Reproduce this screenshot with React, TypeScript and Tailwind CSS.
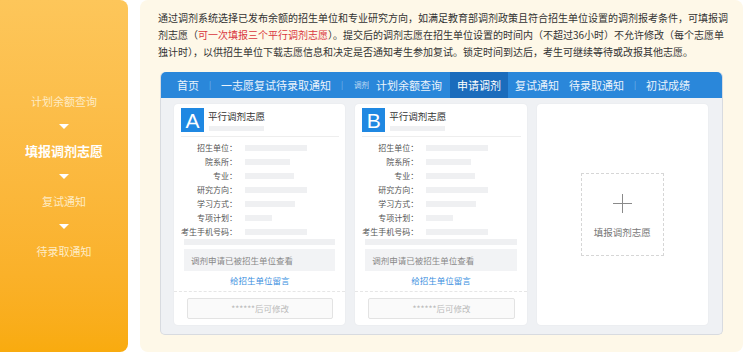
import React from "react";

const FONT = { fontFamily: '"Noto Sans CJK SC", "Noto Sans", sans-serif' };

const steps = [
  { label: "计划余额查询", active: false },
  { label: "填报调剂志愿", active: true },
  { label: "复试通知", active: false },
  { label: "待录取通知", active: false },
];

const fields = [
  { label: "招生单位：", w: 62 },
  { label: "院系所：", w: 45 },
  { label: "专业：", w: 49 },
  { label: "研究方向：", w: 62 },
  { label: "学习方式：", w: 50 },
  { label: "专项计划：", w: 27 },
  { label: "考生手机号码：", w: 62 },
];

const Arrow = () => (
  <div className="h-[25px] flex items-center justify-center">
    <div className="w-0 h-0 border-l-[5px] border-r-[5px] border-t-[5px] border-l-transparent border-r-transparent border-t-white" />
  </div>
);

const Sidebar: React.FC = () => (
  <div className="w-[128px] h-[352px] shrink-0 rounded-r-[8px] bg-linear-to-b from-[#fdc65a] to-[#f9ab0e] flex flex-col justify-center">
    {steps.map((s, i) => (
      <React.Fragment key={s.label}>
        {i > 0 && <Arrow />}
        <div
          className={
            "h-[25px] flex items-center justify-center " +
            (s.active
              ? "text-white text-[13px] font-bold"
              : "text-[#feebc4] text-[11px]")
          }
        >
          {s.label}
        </div>
      </React.Fragment>
    ))}
  </div>
);

const NavBar: React.FC = () => (
  <div className="h-[26px] bg-[#2a87da] flex items-center pl-[11px] text-[11px] text-[#eaf3fc] rounded-t-[5px]">
    <span className="px-[5px]">首页</span>
    <span className="w-[12px] text-center text-[8px] text-white/40">|</span>
    <span className="px-[5px]">一志愿复试待录取通知</span>
    <span className="w-[12px] text-center text-[8px] text-white/40">|</span>
    <span className="ml-[6px] mr-[2px] text-[7.5px] text-white/70">调剂</span>
    <span className="px-[5px]">计划余额查询</span>
    <span className="ml-[3px] px-[7px] h-full flex items-center bg-[#1b6cbc] text-white">
      申请调剂
    </span>
    <span className="ml-[2px] px-[5px]">复试通知</span>
    <span className="px-[5px]">待录取通知</span>
    <span className="w-[12px] text-center text-[8px] text-white/40">|</span>
    <span className="px-[5px]">初试成绩</span>
  </div>
);

const WishCard: React.FC<{ letter: string }> = ({ letter }) => (
  <div className="bg-white rounded-[4px] h-[221px] shadow-[0_0_2px_rgba(0,0,0,0.06)] flex flex-col">
    <div className="h-[32px] flex pt-[4px] pl-[7px]">
      <div
        className="w-[23px] h-[24px] bg-[#1f88e2] text-white flex items-center justify-center text-[21px] leading-none"
        style={{ fontFamily: '"Liberation Sans", Arial, sans-serif' }}
      >
        {letter}
      </div>
      <div className="ml-[4px] flex flex-col">
        <div className="text-[9.5px] leading-[12px] mt-[2px] text-[#333]">平行调剂志愿</div>
        <div className="w-[55px] h-[5px] bg-[#eff0f2] mt-[4px] ml-[1px]" />
      </div>
    </div>
    <div className="h-px bg-[#eeeeee] ml-[7px] mr-[6px]" />
    <div className="pt-[4px]">
      {fields.map((f) => (
        <div key={f.label} className="h-[14px] flex items-center">
          <div className="w-[63px] text-right text-[8px] text-[#555] whitespace-nowrap">
            {f.label}
          </div>
          <div className="ml-[8px] h-[6px] bg-[#eff0f2]" style={{ width: f.w }} />
        </div>
      ))}
    </div>
    <div className="mx-[10px] h-[6px] bg-[#eff0f2]" />
    <div className="mx-[10px] mt-[4px] h-[22px] bg-[#f2f3f5] flex items-center pl-[7px] text-[8.5px] text-[#888]">
      调剂申请已被招生单位查看
    </div>
    <div className="h-[18px] flex items-center justify-center text-[8.5px] text-[#3b8fe0]">
      给招生单位留言
    </div>
    <div className="mt-[2px] border-t border-dashed border-[#e6e6e6]" />
    <div className="mt-[6px] ml-[13px] mr-[12px] h-[21px] border border-[#e3e3e3] bg-[#fafafa] rounded-[2px] flex items-center justify-center text-[8.5px] text-[#bbbbbb]">
      ******后可修改
    </div>
  </div>
);

const AddCard: React.FC = () => (
  <div className="bg-white rounded-[4px] h-[221px] shadow-[0_0_2px_rgba(0,0,0,0.06)] flex items-center justify-center">
    <div className="w-[83px] h-[83px] border border-dashed border-[#d6d6d6] flex flex-col items-center">
      <svg width="19" height="19" viewBox="0 0 19 19" className="mt-[20px]">
        <path d="M9.5 0V19M0 9.5H19" stroke="#8a8a8a" strokeWidth="1" />
      </svg>
      <div className="mt-[12px] text-[9.5px] text-[#777]">填报调剂志愿</div>
    </div>
  </div>
);

export default function App() {
  return (
    <div className="w-[750px] h-[353px] bg-white flex" style={FONT}>
      <Sidebar />
      <div className="ml-[12px] w-[603px] h-[352px] rounded-[8px] bg-[#fef8e8] flex flex-col">
        <p className="pt-[9px] px-[18px] text-[10px] leading-[17px] text-[#333] whitespace-nowrap">
          通过调剂系统选择已发布余额的招生单位和专业研究方向，如满足教育部调剂政策且符合招生单位设置的调剂报考条件，可填报调
          <br />
          剂志愿（<span className="text-[#d9363e]">可一次填报三个平行调剂志愿</span>）。提交后的调剂志愿在招生单位设置的时间内（不超过36小时）不允许修改（每个志愿单
          <br />
          独计时），以供招生单位下载志愿信息和决定是否通知考生参加复试。锁定时间到达后，考生可继续等待或改报其他志愿。
        </p>
        <div className="mx-[20px] mt-[12px] h-[263px] rounded-[5px] border border-t-0 border-[#d8dbe0] bg-[#eff1f4] flex flex-col">
          <NavBar />
          <div className="grid grid-cols-3 gap-[10px] pl-[13px] pr-[14px] pt-[6px]">
            <WishCard letter="A" />
            <WishCard letter="B" />
            <AddCard />
          </div>
        </div>
      </div>
    </div>
  );
}
